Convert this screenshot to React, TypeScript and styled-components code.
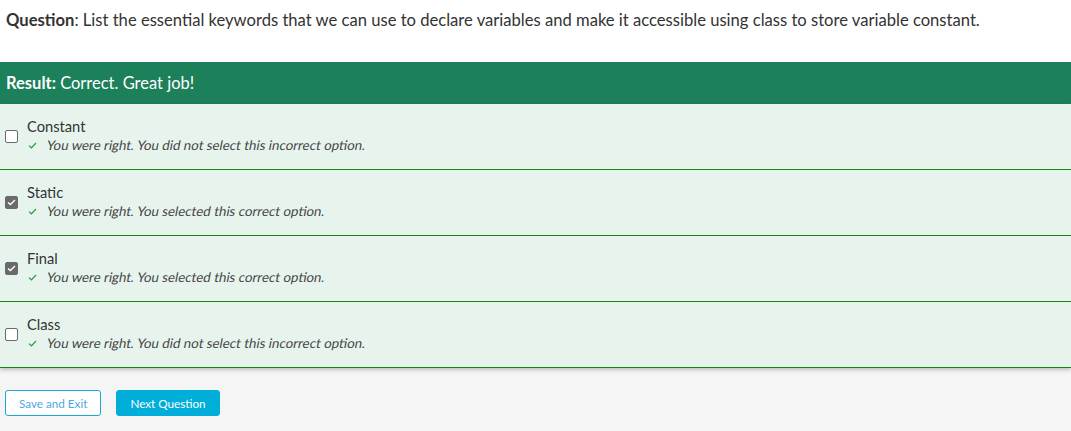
import React from "react";
import styled, { createGlobalStyle } from "styled-components";

const GlobalStyle = createGlobalStyle`
  html, body { margin: 0; padding: 0; background: #f5f5f5; }
  body { font-family: Lato, "Open Sans", "Liberation Sans", sans-serif; color: #333; }
`;

const Page = styled.div`
  width: 1071px;
  height: 431px;
  display: flex;
  flex-direction: column;
  overflow: hidden;
`;

const Top = styled.div`
  background: #fff;
`;

const QuestionLine = styled.div`
  padding: 10px 6px 0 6px;
  height: 62px;
  box-sizing: border-box;
  font-size: 16.6px;
  line-height: 20px;
  color: #333;
  b { font-weight: 700; }
`;

const ResultBar = styled.div`
  background: #1c805a;
  color: #fff;
  height: 42px;
  display: flex;
  align-items: center;
  padding: 0 6px;
  font-size: 16.5px;
  b { font-weight: 700; }
`;

const Options = styled.div`
  box-shadow: 0 2px 4px rgba(0, 0, 0, 0.22);
  position: relative;
`;

const Row = styled.div`
  background: #e7f4ee;
  height: 66px;
  box-sizing: border-box;
  border-bottom: 1px solid #118a11;
  display: flex;
  align-items: center;
  padding: 0 0 0 5px;
`;

const Box = styled.span<{ $checked?: boolean }>`
  width: 13px;
  height: 13px;
  box-sizing: border-box;
  border: 1.5px solid #6a6a6a;
  border-radius: 2px;
  background: ${(p) => (p.$checked ? "#6a6a6a" : "#fff")};
  display: flex;
  align-items: center;
  justify-content: center;
  flex: none;
`;

const Texts = styled.div`
  margin-left: 9px;
  display: flex;
  flex-direction: column;
  margin-top: -3px;
`;

const Label = styled.div`
  font-size: 14.7px;
  line-height: 18px;
  color: #333;
`;

const Feedback = styled.div`
  display: flex;
  align-items: center;
  margin-top: 2px;
  font-size: 13.3px;
  line-height: 16px;
  color: #444;
  svg { margin: 0 10px 0 1px; flex: none; }
`;

const Slanted = styled.span`
  display: inline-block;
  transform: skewX(-11deg);
`;

const Footer = styled.div`
  flex: 1;
  background: #f5f5f5;
  display: flex;
  align-items: flex-start;
  gap: 15px;
  padding: 22px 0 0 5px;
`;

const Button = styled.button<{ $primary?: boolean }>`
  height: 26px;
  box-sizing: border-box;
  padding: 0 13px;
  border-radius: 3px;
  font-family: Lato, "Open Sans", "Liberation Sans", sans-serif;
  font-size: 11.7px;
  border: 1px solid ${(p) => (p.$primary ? "#00aed9" : "#1aa9d6")};
  background: ${(p) => (p.$primary ? "#00aed9" : "#fff")};
  color: ${(p) => (p.$primary ? "#fff" : "#4ea8dd")};
  cursor: pointer;
`;

const Check = () => (
  <svg width="9" height="7" viewBox="0 0 9 7">
    <path d="M1 3.6 L3.4 5.8 L8 1" fill="none" stroke="#2a9a3a" strokeWidth="1.2" />
  </svg>
);

const BoxTick = () => (
  <svg width="9" height="7" viewBox="0 0 9 7">
    <path d="M1 3.4 L3.4 5.6 L8 1" fill="none" stroke="#fff" strokeWidth="1.4" />
  </svg>
);

const options = [
  { label: "Constant", checked: false, text: "You were right. You did not select this incorrect option." },
  { label: "Static", checked: true, text: "You were right. You selected this correct option." },
  { label: "Final", checked: true, text: "You were right. You selected this correct option." },
  { label: "Class", checked: false, text: "You were right. You did not select this incorrect option." },
];

export default function App() {
  return (
    <Page>
      <GlobalStyle />
      <Top>
        <QuestionLine>
          <b>Question</b>: List the essential keywords that we can use to declare variables and make it accessible using class to store variable constant.
        </QuestionLine>
      </Top>
      <ResultBar>
        <b>Result:</b>&nbsp;Correct. Great job!
      </ResultBar>
      <Options>
        {options.map((o) => (
          <Row key={o.label}>
            <Box $checked={o.checked}>{o.checked && <BoxTick />}</Box>
            <Texts>
              <Label>{o.label}</Label>
              <Feedback>
                <Check />
                <Slanted>{o.text}</Slanted>
              </Feedback>
            </Texts>
          </Row>
        ))}
      </Options>
      <Footer>
        <Button>Save and Exit</Button>
        <Button $primary>Next Question</Button>
      </Footer>
    </Page>
  );
}
